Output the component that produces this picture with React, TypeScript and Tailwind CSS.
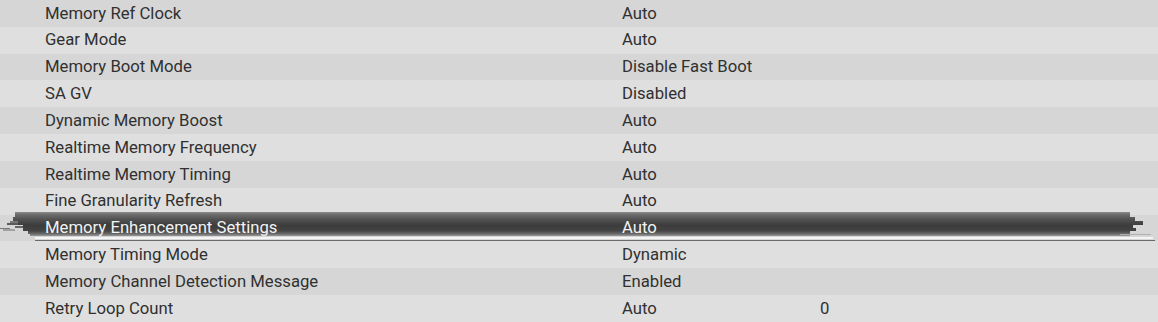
import React from "react";

const rows: { label: string; value: string; extra?: string }[] = [
  { label: "Memory Ref Clock", value: "Auto" },
  { label: "Gear Mode", value: "Auto" },
  { label: "Memory Boot Mode", value: "Disable Fast Boot" },
  { label: "SA GV", value: "Disabled" },
  { label: "Dynamic Memory Boost", value: "Auto" },
  { label: "Realtime Memory Frequency", value: "Auto" },
  { label: "Realtime Memory Timing", value: "Auto" },
  { label: "Fine Granularity Refresh", value: "Auto" },
  { label: "Memory Enhancement Settings", value: "Auto" },
  { label: "Memory Timing Mode", value: "Dynamic" },
  { label: "Memory Channel Detection Message", value: "Enabled" },
  { label: "Retry Loop Count", value: "Auto", extra: "0" },
];

function HighlightBar() {
  return (
    <svg
      className="absolute left-0 top-[-6px] pointer-events-none"
      width={1158}
      height={40}
      viewBox="0 0 1158 40"
      shapeRendering="crispEdges"
    >
      <defs>
        <linearGradient id="barg" gradientUnits="userSpaceOnUse" x1="0" y1="3" x2="0" y2="27">
          <stop offset="0" stopColor="#8e8e8e" />
          <stop offset="0.1" stopColor="#6e6e6e" />
          <stop offset="0.3" stopColor="#525252" />
          <stop offset="0.55" stopColor="#3c3c3c" />
          <stop offset="0.78" stopColor="#444444" />
          <stop offset="0.9" stopColor="#666666" />
          <stop offset="1" stopColor="#999999" />
        </linearGradient>
      </defs>
      <g fill="url(#barg)">
        <rect x="15" y="3" width="1115" height="5" />
        <rect x="13" y="8" width="1122" height="4" />
        <rect x="18" y="12" width="1125" height="4" />
        <rect x="23" y="16" width="1110" height="3" />
        <rect x="23" y="19" width="1113" height="3" />
        <rect x="28" y="22" width="1102" height="3" />
        <rect x="30" y="25" width="1100" height="2" />
      </g>
      {/* left glitch pieces */}
      <rect x="7" y="14" width="11" height="2" fill="#5a5a5a" />
      <rect x="10" y="12" width="8" height="2" fill="#777777" />
      <rect x="0" y="19" width="10" height="1" fill="#7a7a7a" />
      <rect x="3" y="20" width="12" height="2" fill="#a0a0a0" />
      <rect x="15" y="17" width="8" height="2" fill="#666666" />
      {/* light line on right */}
      <rect x="1120" y="25" width="31" height="1" fill="#b0b0b0" />
      {/* white + gray lines beneath */}
      <rect x="35" y="28" width="1118" height="2" fill="#f4f4f4" />
      <rect x="35" y="31" width="1120" height="2" fill="#6a6a6a" />
    </svg>
  );
}

export default function App() {
  return (
    <div
      className="w-[1158px] h-[322px] flex flex-col overflow-hidden bg-[#dadada]"
      style={{ fontFamily: "Roboto, 'Noto Sans', sans-serif" }}
    >
      {rows.map((r, i) => {
        const hl = i === 8;
        const bg = i % 2 === 0 ? "bg-[#d6d6d6]" : "bg-[#dfdfdf]";
        const tc = hl ? "text-[#f2f2f2]" : "text-[#303030]";
        return (
          <div key={r.label} className={`relative flex-1 flex items-center pt-[1px] ${bg}`}>
            {hl && <HighlightBar />}
            <div className={`relative w-[622px] shrink-0 pl-[45px] text-[16.7px] leading-none ${tc}`}>
              {r.label}
            </div>
            <div className={`relative w-[198px] shrink-0 text-[16.7px] leading-none ${tc}`}>
              {r.value}
            </div>
            {r.extra && (
              <div className="relative text-[16.7px] leading-none text-[#303030]">
                {r.extra}
              </div>
            )}
          </div>
        );
      })}
    </div>
  );
}
